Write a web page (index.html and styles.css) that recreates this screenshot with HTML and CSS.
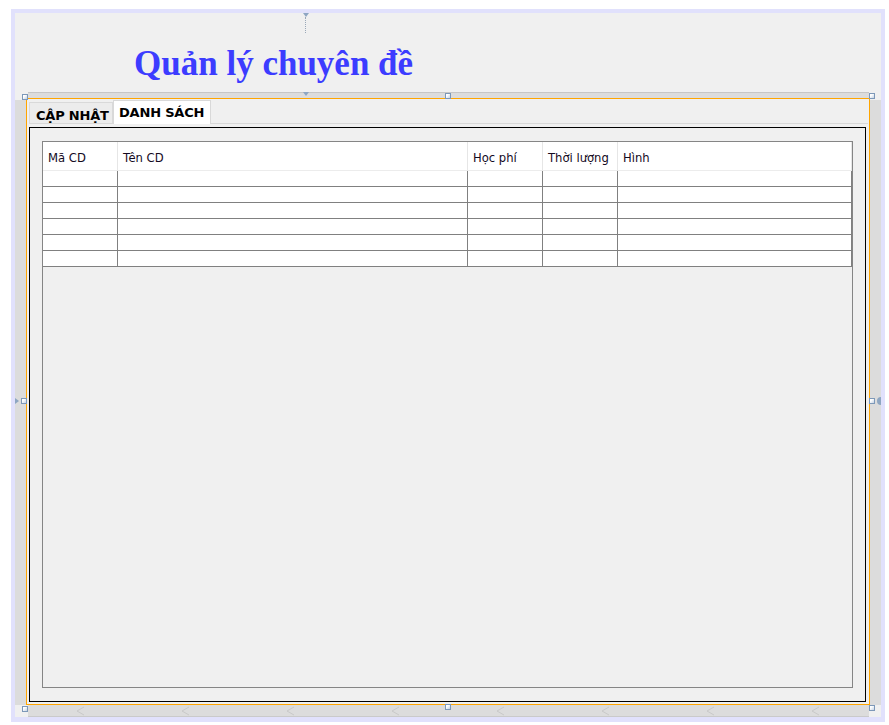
FILE: index.html
```html
<!DOCTYPE html>
<html lang="vi">
<head>
<meta charset="utf-8">
<title>Quản lý chuyên đề</title>
<link rel="stylesheet" href="styles.css">
</head>
<body>
<div class="frame">
  <div class="canvas">
    <div class="head"><h1 class="title">Quản lý chuyên đề</h1></div>
    <div class="form-area">
      <div class="corner"></div>
      <div class="band band-top"></div>
      <div class="corner"></div>
      <div class="strip"></div>
      <div class="panel">
        <div class="tabs">
          <div class="tab">CẬP NHẬT</div>
          <div class="tab tab-active">DANH SÁCH</div>
        </div>
        <div class="tab-body">
          <div class="box">
            <div class="scroll">
              <div class="grid">
                <div class="th">Mã CD</div>
                <div class="th">Tên CD</div>
                <div class="th">Học phí</div>
                <div class="th">Thời lượng</div>
                <div class="th">Hình</div>
                <div class="td"></div><div class="td"></div><div class="td"></div><div class="td"></div><div class="td"></div>
                <div class="td"></div><div class="td"></div><div class="td"></div><div class="td"></div><div class="td"></div>
                <div class="td"></div><div class="td"></div><div class="td"></div><div class="td"></div><div class="td"></div>
                <div class="td"></div><div class="td"></div><div class="td"></div><div class="td"></div><div class="td"></div>
                <div class="td"></div><div class="td"></div><div class="td"></div><div class="td"></div><div class="td"></div>
                <div class="td"></div><div class="td"></div><div class="td"></div><div class="td"></div><div class="td"></div>
              </div>
            </div>
          </div>
        </div>
      </div>
      <div class="strip"></div>
      <div class="corner"></div>
      <div class="band band-bottom">
        <svg class="chev" viewBox="0 0 9 10"><polyline points="8,1 1,5 8,9"/></svg>
        <svg class="chev" viewBox="0 0 9 10"><polyline points="8,1 1,5 8,9"/></svg>
        <svg class="chev" viewBox="0 0 9 10"><polyline points="8,1 1,5 8,9"/></svg>
        <svg class="chev" viewBox="0 0 9 10"><polyline points="8,1 1,5 8,9"/></svg>
        <svg class="chev" viewBox="0 0 9 10"><polyline points="8,1 1,5 8,9"/></svg>
        <svg class="chev" viewBox="0 0 9 10"><polyline points="8,1 1,5 8,9"/></svg>
        <svg class="chev" viewBox="0 0 9 10"><polyline points="8,1 1,5 8,9"/></svg>
        <svg class="chev" viewBox="0 0 9 10"><polyline points="8,1 1,5 8,9"/></svg>
      </div>
      <div class="corner"></div>
    </div>
  </div>

  <div class="anchor-top"></div>
  <div class="anchor-line"></div>
  <div class="anchor-mid"></div>
  <div class="anchor-left"></div>
  <div class="anchor-right"></div>

  <div class="handle h-tl"></div>
  <div class="handle h-tm"></div>
  <div class="handle h-tr"></div>
  <div class="handle h-ml"></div>
  <div class="handle h-mr"></div>
  <div class="handle h-bl"></div>
  <div class="handle h-bm"></div>
  <div class="handle h-br"></div>
</div>
</body>
</html>
```

FILE: styles.css
```css
* { box-sizing: border-box; }

html, body {
  margin: 0;
  padding: 0;
  background: #ffffff;
}

body {
  font-family: "DejaVu Sans", "Liberation Sans", sans-serif;
}

.frame {
  position: relative;
  margin: 9px 0 0 11px;
  width: 874px;
  height: 713px;
  padding: 4px 4px 5px 4px;
  background: #e1e1fc;
}

.canvas {
  height: 704px;
  background: #f0f0f0;
  display: flex;
  flex-direction: column;
}

.head {
  height: 79px;
  padding: 31px 0 0 119px;
}

.title {
  margin: 0;
  font-family: "Liberation Serif", "Times New Roman", serif;
  font-weight: bold;
  font-size: 35px;
  line-height: 40px;
  color: #3c3cff;
}

.form-area {
  height: 625px;
  display: grid;
  grid-template-columns: 11px 844px 11px;
  grid-template-rows: 6px 607px 12px;
}

.band {
  background: #dcdcdc;
}

.band-top {
  margin: 0 1px 0 2px;
  border-top: 1px solid #c6c6c6;
}

.band-bottom {
  margin: 0 1px 0 2px;
  border-bottom: 1px solid #cacaca;
  display: flex;
  align-items: center;
  gap: 96px;
  padding-left: 48px;
}

.chev {
  width: 9px;
  height: 10px;
  fill: none;
  stroke: #c9c9c9;
  stroke-width: 1;
}

.strip {
  margin-top: 2px;
  background: #dcdcdc;
}

.panel {
  border: 1px solid #ffa500;
  display: flex;
  flex-direction: column;
}

.tabs {
  height: 24px;
  margin: 0 1px 0 2px;
  display: flex;
  align-items: flex-end;
}

.tab {
  width: 84px;
  height: 21px;
  padding: 5px 0 0 6px;
  border: 1px solid #d9d9d9;
  border-bottom: none;
  background: #ececec;
  font-weight: bold;
  font-size: 13px;
  line-height: 15px;
  color: #000;
  white-space: nowrap;
  letter-spacing: -0.2px;
}

.tab-active {
  position: relative;
  z-index: 1;
  width: 98px;
  height: 24px;
  margin-bottom: -1px;
  padding-top: 4px;
  padding-left: 5px;
  background: #ffffff;
}

.tab-body {
  flex: 1;
  margin: 0 1px 0 2px;
  border-top: 1px solid #d9d9d9;
  padding-top: 3px;
}

.box {
  width: 837px;
  height: 575px;
  border: 1px solid #000000;
  padding: 13px 0 0 12px;
}

.scroll {
  width: 811px;
  height: 547px;
  border: 1px solid #858585;
}

.grid {
  display: grid;
  grid-template-columns: 75px 350px 75px 75px 234px;
}

.th {
  height: 29px;
  padding: 10px 5px 0;
  background: #ffffff;
  border-right: 1px solid #e6e6e6;
  border-bottom: 1px solid #ececec;
  font-size: 11.6px;
  line-height: 13px;
  color: #140a1e;
  white-space: nowrap;
}

.td {
  height: 16px;
  background: #ffffff;
  border-right: 1px solid #808080;
  border-bottom: 1px solid #808080;
}

/* designer anchors and handles (overlays) */
.anchor-top {
  position: absolute;
  left: 292px;
  top: 4px;
  width: 0;
  height: 0;
  border-left: 3px solid transparent;
  border-right: 3px solid transparent;
  border-top: 4px solid #8ea6c2;
}

.anchor-line {
  position: absolute;
  left: 294px;
  top: 8px;
  height: 16px;
  border-left: 1px dotted #9aa8b8;
}

.anchor-mid {
  position: absolute;
  left: 292px;
  top: 83px;
  width: 0;
  height: 0;
  border-left: 3px solid transparent;
  border-right: 3px solid transparent;
  border-top: 4px solid #8ea6c2;
}

.anchor-left {
  position: absolute;
  left: 4px;
  top: 389px;
  width: 0;
  height: 0;
  border-top: 3px solid transparent;
  border-bottom: 3px solid transparent;
  border-left: 4px solid #8ea6c2;
}

.anchor-right {
  position: absolute;
  left: 866px;
  top: 388px;
  width: 4px;
  height: 8px;
  border-radius: 4px 0 0 4px;
  background: #8ea6c2;
}

.handle {
  position: absolute;
  width: 6px;
  height: 6px;
  border: 1px solid #7d98b8;
  background: linear-gradient(135deg, #ffffff 30%, #c4d2e4);
}

.h-tl { left: 11px; top: 85px; }
.h-tm { left: 434px; top: 84px; }
.h-tr { left: 858px; top: 84px; }
.h-ml { left: 10px; top: 389px; }
.h-mr { left: 858px; top: 389px; }
.h-bl { left: 11px; top: 697px; }
.h-bm { left: 434px; top: 695px; }
.h-br { left: 858px; top: 696px; }
```
